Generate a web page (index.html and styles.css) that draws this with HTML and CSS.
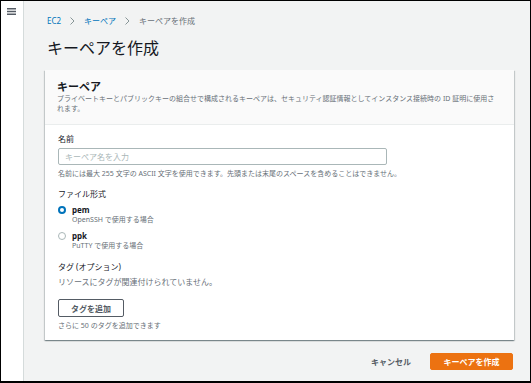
FILE: index.html
```html
<!DOCTYPE html>
<html lang="ja">
  <head>
    <meta charset="utf-8">
    <title>キーペアを作成</title>
    <link rel="stylesheet" href="styles.css">
  </head>
  <body>
    <div class="frame">
      <nav class="sidebar">
        <span class="menu-icon">
          <svg width="9" height="7" viewBox="0 0 9 7">
            <path d="M0 0.75H9M0 3.5H9M0 6.25H9" stroke="#545b64" stroke-width="1.4"/>
          </svg>
        </span>
      </nav>
      <main class="content">
        <div class="breadcrumbs">
          <a class="crumb-link">EC2</a>
          <svg class="chevron" width="5" height="8" viewBox="0 0 5 8">
            <path d="M0.5 0.5L4 4L0.5 7.5" fill="none" stroke="#879596" stroke-width="1"/>
          </svg>
          <a class="crumb-link">キーペア</a>
          <svg class="chevron" width="5" height="8" viewBox="0 0 5 8">
            <path d="M0.5 0.5L4 4L0.5 7.5" fill="none" stroke="#879596" stroke-width="1"/>
          </svg>
          <span class="crumb-current">キーペアを作成</span>
        </div>

        <h1 class="page-title">キーペアを作成</h1>

        <section class="card">
          <header class="card-header">
            <h2 class="card-title">キーペア</h2>
            <p class="card-desc">プライベートキーとパブリックキーの組合せで構成されるキーペアは、セキュリティ認証情報としてインスタンス接続時の ID 証明に使用されます。</p>
          </header>
          <div class="card-body">
            <div class="field">
              <label class="field-label" for="key-name">名前</label>
              <input type="text" id="key-name" class="text-input" placeholder="キーペア名を入力">
              <div class="hint">名前には最大 255 文字の ASCII 文字を使用できます。先頭または末尾のスペースを含めることはできません。</div>
            </div>

            <div class="field">
              <div class="field-label">ファイル形式</div>
              <div class="radio-group">
                <div class="radio-item">
                  <span class="radio checked"></span>
                  <div>
                    <div class="radio-label">pem</div>
                    <div class="hint">OpenSSH で使用する場合</div>
                  </div>
                </div>
                <div class="radio-item">
                  <span class="radio"></span>
                  <div>
                    <div class="radio-label">ppk</div>
                    <div class="hint">PuTTY で使用する場合</div>
                  </div>
                </div>
              </div>
            </div>

            <div class="field field-tags">
              <div class="field-label">タグ (オプション)</div>
              <div class="empty-text">リソースにタグが関連付けられていません。</div>
              <button type="button" class="btn-normal">タグを追加</button>
              <div class="hint">さらに 50 のタグを追加できます</div>
            </div>
          </div>
        </section>

        <div class="actions">
          <button type="button" class="btn-link">キャンセル</button>
          <button type="button" class="btn-primary">キーペアを作成</button>
        </div>
      </main>
    </div>
  </body>
</html>
```

FILE: styles.css
```css
:root {
  --color-bg: #f2f3f3;
  --color-text: #16191f;
  --color-secondary: #687078;
  --color-link: #0073bb;
  --color-border: #aab7b8;
  --color-divider: #eaeded;
  --color-button: #545b64;
  --color-primary: #ec7211;
}

* {
  box-sizing: border-box;
}

html, body {
  margin: 0;
  padding: 0;
}

body {
  font-family: "Noto Sans", "Noto Sans CJK JP", sans-serif;
  color: var(--color-text);
}

.frame {
  width: 531px;
  height: 383px;
  border: 1px solid #000;
  border-bottom-width: 2px;
  display: flex;
  overflow: hidden;
}

.sidebar {
  width: 23px;
  flex: none;
  background: #fff;
  border-right: 1px solid #d5dbdb;
  padding: 7px 0 0 6px;
}

.menu-icon {
  display: block;
  line-height: 0;
}

.content {
  flex: 1;
  background: var(--color-bg);
  padding: 15px 16px 0 21px;
}

.breadcrumbs {
  display: flex;
  align-items: center;
  gap: 8px;
  height: 10px;
  font-size: 8px;
  line-height: 10px;
  padding-left: 2px;
}

.crumb-link {
  color: var(--color-link);
}

.crumb-current {
  color: var(--color-secondary);
}

.chevron {
  margin: 0 1px;
}

.page-title {
  margin: 12px 0 0 2px;
  font-size: 16px;
  line-height: 20px;
  font-weight: normal;
}

.card {
  margin-top: 12px;
  background: #fff;
  box-shadow: 0 1px 1px 0 rgba(0, 28, 36, 0.3), 1px 1px 1px 0 rgba(0, 28, 36, 0.15), -1px 1px 1px 0 rgba(0, 28, 36, 0.15);
}

.card-header {
  background: #fafafa;
  border-bottom: 1px solid var(--color-divider);
  padding: 10px 16px 10px 12px;
}

.card-title {
  margin: 0;
  font-size: 11px;
  line-height: 14px;
  font-weight: bold;
}

.card-desc {
  margin: 0;
  font-size: 7px;
  line-height: 10px;
  color: var(--color-secondary);
}

.card-body {
  padding: 8px 12px 9px 13px;
}

.field + .field {
  margin-top: 9px;
}

.field + .field-tags {
  margin-top: 10px;
}

.field-label {
  display: block;
  font-size: 8px;
  line-height: 11px;
}

.text-input {
  display: block;
  margin-top: 4px;
  width: 329px;
  height: 17px;
  padding: 0 6px;
  border: 1px solid var(--color-border);
  border-radius: 2px;
  font-family: inherit;
  font-size: 8px;
  color: var(--color-text);
}

.text-input::placeholder {
  color: var(--color-border);
}

.hint {
  font-size: 7px;
  line-height: 10px;
  color: var(--color-secondary);
  margin-top: 4px;
}

.radio-group {
  margin-top: 6px;
  display: flex;
  flex-direction: column;
  gap: 6px;
}

.radio-item {
  display: flex;
  gap: 6px;
}

.radio-item .hint {
  margin-top: 0;
}

.radio {
  width: 8px;
  height: 8px;
  margin-top: 1px;
  border-radius: 50%;
  border: 1px solid var(--color-border);
  background: #fff;
  flex: none;
}

.radio.checked {
  border: 2.5px solid var(--color-link);
}

.radio-label {
  font-size: 8px;
  line-height: 10px;
  font-weight: bold;
}

.empty-text {
  margin-top: 4px;
  font-size: 8px;
  line-height: 11px;
  color: var(--color-secondary);
}

.btn-normal {
  display: block;
  margin-top: 12px;
  width: 66px;
  height: 18px;
  padding: 0;
  background: #fff;
  border: 1px solid var(--color-button);
  border-radius: 2px;
  font-family: inherit;
  font-size: 8px;
  font-weight: bold;
  color: var(--color-button);
}

.field-tags .hint {
  margin-top: 4px;
}

.actions {
  display: flex;
  justify-content: flex-end;
  align-items: center;
  gap: 19px;
  margin-top: 13px;
  padding-right: 1px;
}

.btn-link {
  background: none;
  border: none;
  padding: 0;
  font-family: inherit;
  font-size: 8px;
  font-weight: bold;
  color: var(--color-button);
}

.btn-primary {
  width: 83px;
  height: 17px;
  padding: 0;
  background: var(--color-primary);
  border: 1px solid var(--color-primary);
  border-radius: 2px;
  font-family: inherit;
  font-size: 8px;
  font-weight: bold;
  color: #fff;
}
```
